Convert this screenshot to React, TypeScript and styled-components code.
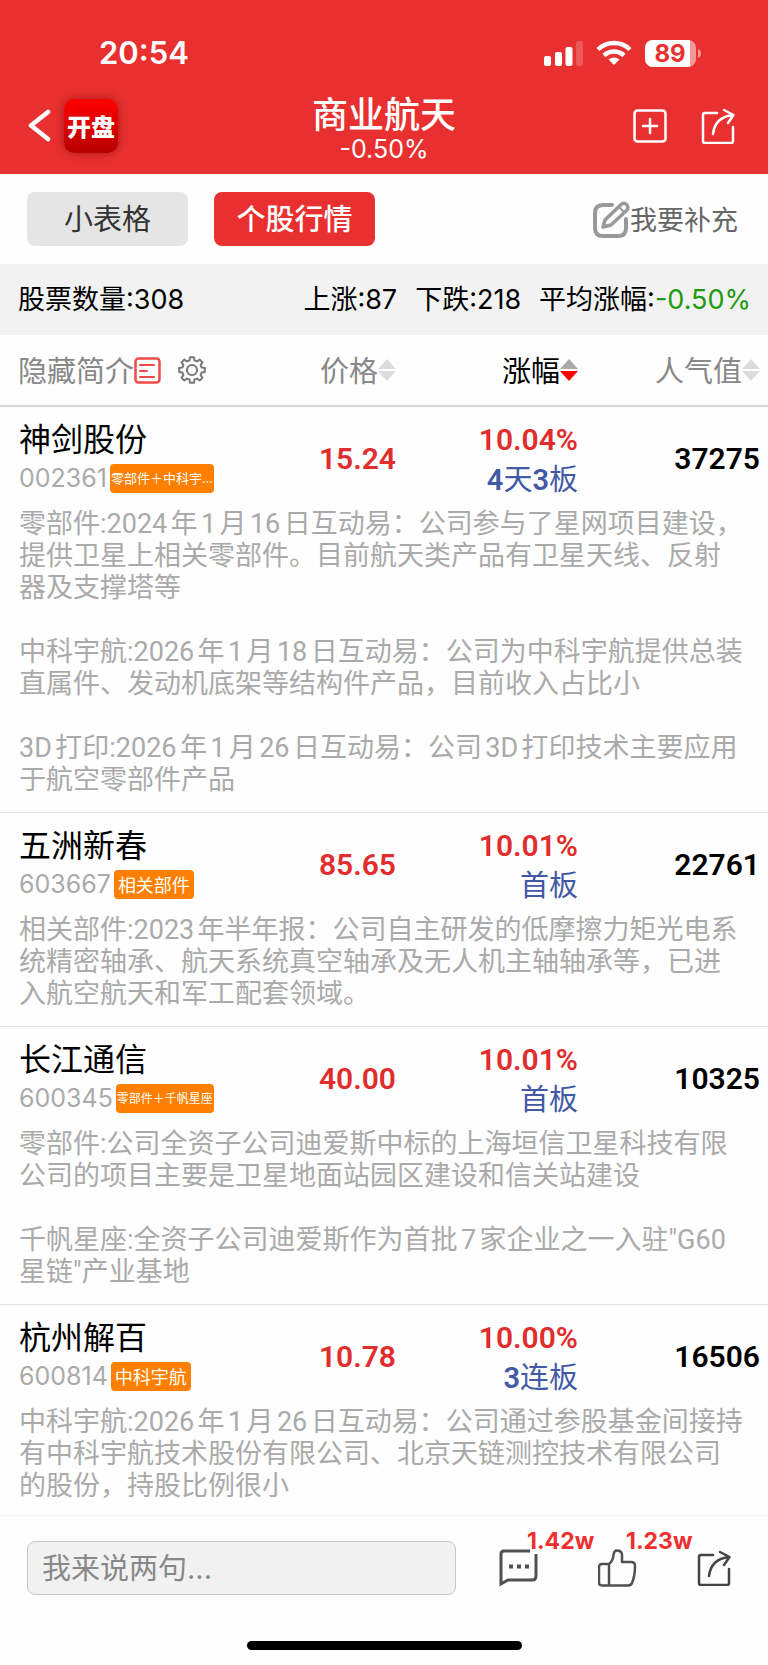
import React from 'react';
import styled, { createGlobalStyle, css } from 'styled-components';

const GlobalStyle = createGlobalStyle`
  *, *::before, *::after { box-sizing: border-box; }
  body {
    margin: 0;
    background: #fefefe;
    color: #000;
    font-family: Inter, "Noto Sans CJK SC", sans-serif;
    font-size: 27px;
    line-height: 32px;
  }
  button, input, table { font: inherit; color: inherit; }
  button { border: 0; padding: 0; background: none; cursor: pointer; }
`;

const Page = styled.div`
  display: flex;
  flex-direction: column;
  min-height: 100vh;
`;

const TopArea = styled.header`
  background: #e93030;
  color: #fff;
  height: 174px;
`;

const StatusBar = styled.div`
  display: flex;
  align-items: flex-end;
  justify-content: space-between;
  height: 80px;
  padding: 0 67px 11px 99px;
`;

const Clock = styled.time`
  font: 600 31px/32px Inter, sans-serif;
`;

const StatusIcons = styled.div`
  display: flex;
  align-items: center;
  gap: 13px;
  height: 32px;
`;

const NavBar = styled.nav`
  display: grid;
  grid-template-columns: 1fr auto 1fr;
  align-items: center;
  height: 94px;
  padding: 0 27px 2px;
`;

const NavGroup = styled.div<{ $end?: boolean }>`
  display: flex;
  align-items: center;
  gap: ${p => (p.$end ? 34 : 12)}px;
  padding-right: ${p => (p.$end ? 6 : 0)}px;
  justify-content: ${p => (p.$end ? 'flex-end' : 'flex-start')};
`;

const IconButton = styled.button`
  display: flex;
  align-items: center;
  justify-content: center;
  position: relative;
`;

const AppBadge = styled.a`
  display: flex;
  align-items: center;
  justify-content: center;
  width: 54px;
  height: 54px;
  border-radius: 10px;
  background: linear-gradient(#ff0000, #b80000);
  box-shadow: 0 0 10px rgba(100, 0, 0, 0.5);
  color: #fff;
  font: 900 24px/54px "Noto Sans CJK SC", sans-serif;
  text-decoration: none;
`;

const TitleBlock = styled.div`
  display: flex;
  flex-direction: column;
  align-items: center;
  gap: 2px;
  padding-top: 6px;
`;

const Title = styled.h1`
  margin: 0;
  font: 500 36px/38px "Noto Sans CJK SC", sans-serif;
`;

const SubTitle = styled.span`
  font: 400 25px/32px Inter, sans-serif;
`;

const Toolbar = styled.div`
  display: flex;
  align-items: center;
  gap: 26px;
  height: 90px;
  padding: 0 30px 0 27px;
`;

const Tab = styled.button<{ $active?: boolean }>`
  width: 161px;
  height: 54px;
  padding-top: 2px;
  border-radius: 8px;
  font-size: 29px;
  background: #e5e5e5;
  color: #333;
  ${p => p.$active && css`
    background: #e93030;
    color: #fff;
    font-weight: 500;
  `}
`;

const Supplement = styled.button`
  display: flex;
  align-items: center;
  margin-left: auto;
  color: #666;
`;

const Label = styled.span`
  padding-top: 4px;
`;

const Summary = styled.div`
  display: flex;
  align-items: center;
  gap: 18px;
  height: 71px;
  padding: 1px 17px 0 18px;
  background: #f2f2f2;
`;

const SummaryLead = styled.span`
  margin-right: auto;
`;

const Down = styled.span`
  color: #1f990f;
`;

const Table = styled.table`
  width: 100%;
  table-layout: fixed;
  border-collapse: separate;
  border-spacing: 0;
`;

const NameCol = styled.col``;
const ValueCol = styled.col`width: 182px;`;
const LastCol = styled.col`width: 190px;`;

const HeadCell = styled.th<{ $lead?: boolean }>`
  height: 72px;
  padding: 0 0 0 ${p => (p.$lead ? 18 : 0)}px;
  border-bottom: 2px solid #d6d6d6;
  font-weight: 400;
  &:last-child { padding-right: 8px; }
`;

const HeadContent = styled.div<{ $lead?: boolean }>`
  display: flex;
  align-items: center;
  justify-content: ${p => (p.$lead ? 'flex-start' : 'flex-end')};
  gap: ${p => (p.$lead ? 17 : 0)}px;
`;

const HeadButton = styled.button<{ $active?: boolean }>`
  display: flex;
  align-items: center;
  font-size: 29px;
  white-space: nowrap;
  color: ${p => (p.$active ? '#000' : '#888')};
`;

const Cell = styled.td<{ $single?: boolean }>`
  height: 101px;
  padding: ${p => (p.$single ? '14px 0 11px' : '11px 0 12px')};
  text-align: right;
  &:first-child { padding-left: 19px; text-align: left; }
  &:last-child { padding-right: 8px; }
`;

const StockName = styled.div`
  font-size: 32px;
  line-height: 44px;
`;

const CodeLine = styled.div`
  display: flex;
  align-items: center;
  gap: 3px;
  height: 32px;
  margin-bottom: 2px;
  color: #aaa;
  font: 400 25px/32px Inter, sans-serif;
`;

const Tag = styled.span<{ $size: number }>`
  height: 29px;
  padding: 0 ${p => (p.$size < 18 ? 1 : 4)}px;
  border-radius: 4px;
  background: #ff8000;
  color: #fff;
  font: 400 ${p => p.$size}px/28px "Noto Sans CJK SC", sans-serif;
  white-space: nowrap;
`;

const Figure = styled.div<{ $up?: boolean }>`
  font-family: Roboto, sans-serif;
  font-size: 30px;
  font-weight: 600;
  line-height: 44px;
  color: ${p => (p.$up ? '#e12d2d' : '#000')};
`;

const Streak = styled.div`
  color: #4259a5;
  font-family: Roboto, "Noto Sans CJK SC", sans-serif;
  font-size: 29px;
  line-height: 36px;
  margin-bottom: -2px;
  b { font-weight: 600; }
`;

const NoteCell = styled.td<{ $last?: boolean }>`
  padding: 0 21px ${p => (p.$last ? 12 : 16)}px 19px;
  border-bottom: ${p => (p.$last ? 0 : 1)}px solid #e2e2e2;
  color: #aaa;
`;

const Note = styled.p`
  margin: 0;
  font-family: Roboto, "Noto Sans CJK SC", sans-serif;
  text-autospace: normal;
  & + & { margin-top: 32px; }
`;

const Footer = styled.footer`
  margin-top: auto;
  border-top: 1px solid #f7f7f7;
  height: 150px;
  display: flex;
  flex-direction: column;
  justify-content: space-between;
  align-items: center;
  padding: 25px 0 15px;
`;

const CommentBar = styled.div`
  display: flex;
  align-items: center;
  width: 100%;
  padding: 0 37px 0 27px;
`;

const CommentInput = styled.input`
  flex: 1;
  min-width: 0;
  height: 54px;
  margin-right: 43px;
  padding: 0 14px;
  border: 1px solid #c8c8c8;
  border-radius: 8px;
  background: #f1f1f1;
  font-size: 29px;
  &::placeholder { color: #888; opacity: 1; }
`;

const Actions = styled.div`
  display: flex;
  align-items: center;
  gap: 60px;
`;

const Count = styled.span`
  position: absolute;
  left: 28px;
  top: -20px;
  color: #ee3030;
  font: 700 23px/24px Inter, sans-serif;
`;

const HomeIndicator = styled.div`
  width: 275px;
  height: 9px;
  border-radius: 5px;
  background: #000;
`;

const ShareIcon = ({ color = '#fff' }: { color?: string }) => (
  <svg width="34" height="36" viewBox="0 0 34 36" fill="none" stroke={color} strokeWidth="2.500" strokeLinecap="round" strokeLinejoin="round">
    <path d="M16 5H4Q2 5 2 7V33Q2 35 4 35H30Q32 35 32 33V19" />
    <path d="M12 26Q14 9 32 7M23 2L32.500 7L27 15" />
  </svg>
);

const SortIcon = ({ active }: { active?: boolean }) => (
  <svg width="18" height="22" viewBox="0 0 18 22">
    <path d="M9 0L18 10H0Z" fill={active ? '#aaa' : '#dcdcdc'} />
    <path d="M0 12H18L9 22Z" fill={active ? '#f00' : '#dcdcdc'} />
  </svg>
);

const gearPoints = () => {
  const parts: string[] = [];
  for (let i = 0; i < 8; i++) {
    [[-14, 10], [-9, 13], [9, 13], [14, 10]].forEach(([offset, r]) => {
      const a = ((i * 45 + offset) * Math.PI) / 180;
      parts.push(`${(14 + r * Math.sin(a)).toFixed(2)},${(14 - r * Math.cos(a)).toFixed(2)}`);
    });
  }
  return parts.join(' ');
};

interface Stock {
  name: string;
  code: string;
  tag: string;
  tagSize: number;
  price: string;
  change: string;
  streak: string;
  heat: string;
  notes: string[];
}

const stocks: Stock[] = [
  {
    name: '神剑股份', code: '002361', tag: '零部件＋中科宇...', tagSize: 13, price: '15.24', change: '10.04%', streak: '4天3板', heat: '37275',
    notes: [
      '零部件:2024年1月16日互动易：公司参与了星网项目建设，提供卫星上相关零部件。目前航天类产品有卫星天线、反射器及支撑塔等',
      '中科宇航:2026年1月18日互动易：公司为中科宇航提供总装直属件、发动机底架等结构件产品，目前收入占比小',
      '3D打印:2026年1月26日互动易：公司3D打印技术主要应用于航空零部件产品',
    ],
  },
  {
    name: '五洲新春', code: '603667', tag: '相关部件', tagSize: 18, price: '85.65', change: '10.01%', streak: '首板', heat: '22761',
    notes: ['相关部件:2023年半年报：公司自主研发的低摩擦力矩光电系统精密轴承、航天系统真空轴承及无人机主轴轴承等，已进入航空航天和军工配套领域。'],
  },
  {
    name: '长江通信', code: '600345', tag: '零部件＋千帆星座', tagSize: 12, price: '40.00', change: '10.01%', streak: '首板', heat: '10325',
    notes: [
      '零部件:公司全资子公司迪爱斯中标的上海垣信卫星科技有限公司的项目主要是卫星地面站园区建设和信关站建设',
      '千帆星座:全资子公司迪爱斯作为首批7家企业之一入驻"G60星链"产业基地',
    ],
  },
  {
    name: '杭州解百', code: '600814', tag: '中科宇航', tagSize: 18, price: '10.78', change: '10.00%', streak: '3连板', heat: '16506',
    notes: ['中科宇航:2026年1月26日互动易：公司通过参股基金间接持有中科宇航技术股份有限公司、北京天链测控技术有限公司的股份，持股比例很小'],
  },
];

const StreakText = ({ text }: { text: string }) => (
  <Streak>
    {text.split(/(\d+)/).map((part, i) => (i % 2 ? <b key={i}>{part}</b> : part))}
  </Streak>
);

export default function App() {
  return (
    <Page>
      <GlobalStyle />
      <TopArea>
        <StatusBar>
          <Clock>20:54</Clock>
          <StatusIcons>
            <svg width="39" height="25" viewBox="0 0 39 25" fill="#fff">
              <rect x="0" y="15" width="7" height="10" rx="2" />
              <rect x="11" y="11" width="7" height="14" rx="2" />
              <rect x="21.500" y="6" width="7" height="19" rx="2" />
              <rect x="32" y="0" width="7" height="25" rx="2" opacity=".2" />
            </svg>
            <svg width="36" height="26" viewBox="0 0 36 26" fill="none" stroke="#fff" strokeWidth="4.500">
              <path d="M2 9.500A23 23 0 0 1 34 9.500" />
              <path d="M8 15.500A14.500 14.500 0 0 1 28 15.500" />
              <path d="M18 25L12.500 19.500Q18 15.500 23.500 19.500Z" fill="#fff" stroke="none" />
            </svg>
            <svg width="56" height="27" viewBox="0 0 56 27">
              <clipPath id="battery"><rect width="51" height="27" rx="8" /></clipPath>
              <g clipPath="url(#battery)">
                <rect width="51" height="27" fill="#fff" opacity=".5" />
                <rect width="45" height="27" fill="#fff" />
              </g>
              <path d="M53 9Q56 10.500 56 13.500T53 18Z" fill="#fff" opacity=".5" />
              <text x="25" y="22" textAnchor="middle" fill="#e93030" fontFamily="Inter, sans-serif" fontWeight="700" fontSize="24">89</text>
            </svg>
          </StatusIcons>
        </StatusBar>
        <NavBar>
          <NavGroup>
            <IconButton aria-label="返回">
              <svg width="25" height="34" viewBox="0 0 25 34" fill="none" stroke="#fff" strokeWidth="4.500" strokeLinecap="round" strokeLinejoin="round">
                <path d="M21 3L4 16.500L21 30" />
              </svg>
            </IconButton>
            <AppBadge href="#home">开盘</AppBadge>
          </NavGroup>
          <TitleBlock>
            <Title>商业航天</Title>
            <SubTitle>-0.50%</SubTitle>
          </TitleBlock>
          <NavGroup $end>
            <IconButton aria-label="添加">
              <svg width="34" height="34" viewBox="0 0 34 34" fill="none" stroke="#fff" strokeWidth="2.500" strokeLinecap="round">
                <rect x="1.500" y="1.500" width="31" height="31" rx="3" />
                <path d="M17 10V24M10 17H24" />
              </svg>
            </IconButton>
            <IconButton aria-label="分享"><ShareIcon /></IconButton>
          </NavGroup>
        </NavBar>
      </TopArea>

      <Toolbar>
        <Tab>小表格</Tab>
        <Tab $active>个股行情</Tab>
        <Supplement>
          <svg width="37" height="37" viewBox="0 0 37 37" fill="none" stroke="#999" strokeWidth="4" strokeLinecap="round" strokeLinejoin="round">
            <path d="M19 4H10Q2 4 2 12V27Q2 35 10 35H25Q33 35 33 27V18" />
            <path d="M10 26L12 19L28 3.500Q31 1 33.500 3.500T34 9L18 24Z" strokeWidth="3.500" />
            <path d="M26 6L31 11" strokeWidth="2" />
          </svg>
          <Label>我要补充</Label>
        </Supplement>
      </Toolbar>

      <Summary>
        <SummaryLead>股票数量:308</SummaryLead>
        <span>上涨:87</span>
        <span>下跌:218</span>
        <span>平均涨幅:<Down>-0.50%</Down></span>
      </Summary>

      <Table>
        <colgroup>
          <NameCol />
          <ValueCol />
          <ValueCol />
          <LastCol />
        </colgroup>
        <thead>
          <tr>
            <HeadCell $lead>
              <HeadContent $lead>
                <HeadButton>
                  <Label>隐藏简介</Label>
                  <svg width="27" height="27" viewBox="0 0 27 27" fill="none" stroke="#f04a4a" strokeWidth="2.500" strokeLinecap="round">
                    <rect x="1.500" y="1.500" width="24" height="24" rx="3" />
                    <path d="M6 8H20M6 14H13M6 20H20" strokeWidth="2" />
                  </svg>
                </HeadButton>
                <IconButton aria-label="设置">
                  <svg width="28" height="28" viewBox="0 0 28 28" fill="none" stroke="#777" strokeWidth="2" strokeLinejoin="round">
                    <polygon points={gearPoints()} />
                    <circle cx="14" cy="14" r="5" />
                  </svg>
                </IconButton>
              </HeadContent>
            </HeadCell>
            <HeadCell><HeadContent><HeadButton><Label>价格</Label><SortIcon /></HeadButton></HeadContent></HeadCell>
            <HeadCell><HeadContent><HeadButton $active><Label>涨幅</Label><SortIcon active /></HeadButton></HeadContent></HeadCell>
            <HeadCell><HeadContent><HeadButton><Label>人气值</Label><SortIcon /></HeadButton></HeadContent></HeadCell>
          </tr>
        </thead>
        {stocks.map((s, i) => (
          <tbody key={s.code}>
            <tr>
              <Cell>
                <StockName>{s.name}</StockName>
                <CodeLine>{s.code}<Tag $size={s.tagSize}>{s.tag}</Tag></CodeLine>
              </Cell>
              <Cell $single><Figure $up>{s.price}</Figure></Cell>
              <Cell>
                <Figure $up>{s.change}</Figure>
                <StreakText text={s.streak} />
              </Cell>
              <Cell $single><Figure>{s.heat}</Figure></Cell>
            </tr>
            <tr>
              <NoteCell colSpan={4} $last={i === stocks.length - 1}>
                {s.notes.map(n => <Note key={n}>{n}</Note>)}
              </NoteCell>
            </tr>
          </tbody>
        ))}
      </Table>

      <Footer>
        <CommentBar>
          <CommentInput aria-label="评论" placeholder="我来说两句..." />
          <Actions>
            <IconButton aria-label="评论 1.42w">
              <svg width="39" height="38" viewBox="0 0 39 38" fill="none" stroke="#505050" strokeWidth="3">
                <path d="M31 2H5Q2 2 2 5V35L9 31H33Q37 31 37 27V5" />
                <path d="M10 17.500H14M18 17.500H22M26 17.500H30" strokeWidth="4" />
              </svg>
              <Count>1.42w</Count>
            </IconButton>
            <IconButton aria-label="点赞 1.23w">
              <svg width="39" height="38" viewBox="1 0 39 38" fill="none" stroke="#505050" strokeWidth="2.500" strokeLinejoin="round">
                <path d="M12 15H5Q2 15 2 18V34Q2 36.500 5 36.500H31Q34 36.500 35 34Q38 27 38 17Q38 13 34 13H25V5Q24 1.500 20 1.500Q17 1.500 16.500 6Q16 12 12 15V36" />
              </svg>
              <Count>1.23w</Count>
            </IconButton>
            <IconButton aria-label="分享"><ShareIcon color="#444" /></IconButton>
          </Actions>
        </CommentBar>
        <HomeIndicator />
      </Footer>
    </Page>
  );
}
